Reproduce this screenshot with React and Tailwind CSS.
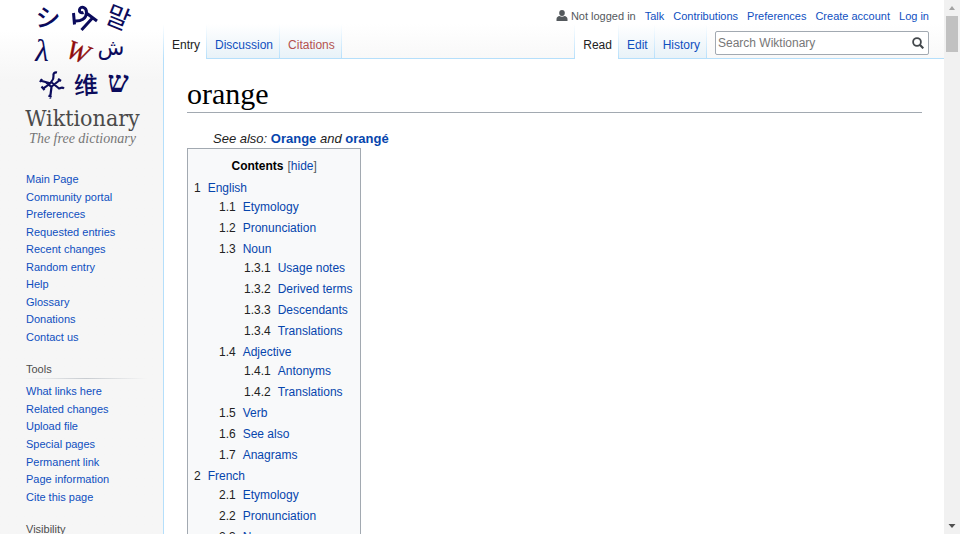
import React from "react";

const navLinks = ["Main Page", "Community portal", "Preferences", "Requested entries", "Recent changes", "Random entry", "Help", "Glossary", "Donations", "Contact us"];
const toolLinks = ["What links here", "Related changes", "Upload file", "Special pages", "Permanent link", "Page information", "Cite this page"];
const personalLinks = ["Talk", "Contributions", "Preferences", "Create account", "Log in"];

const contents = [
  {
    label: "English",
    children: [
      { label: "Etymology" },
      { label: "Pronunciation" },
      { label: "Noun", children: [{ label: "Usage notes" }, { label: "Derived terms" }, { label: "Descendants" }, { label: "Translations" }] },
      { label: "Adjective", children: [{ label: "Antonyms" }, { label: "Translations" }] },
      { label: "Verb" },
      { label: "See also" },
      { label: "Anagrams" },
    ],
  },
  { label: "French", children: [{ label: "Etymology" }, { label: "Pronunciation" }, { label: "Noun" }] },
];

function Logo() {
  return (
    <a href="#main" aria-label="Wiktionary, The free dictionary" className="flex flex-col items-center">
      <svg viewBox="0 0 104 104" className="h-[104px] w-[104px] overflow-visible" fill="#0b0b5c" aria-hidden="true">
        <g fontFamily="'Noto Sans CJK JP', sans-serif" textAnchor="middle">
          <text x="17" y="27" fontSize="25" fontWeight="500" transform="rotate(3 17 18)">シ</text>
          <text x="87" y="27" fontSize="26" fontFamily="'Noto Sans CJK KR', sans-serif" transform="rotate(22 87 18)">말</text>
          <text x="11" y="61" fontSize="31" fontStyle="italic" fontFamily="'Liberation Serif', serif">λ</text>
          <text x="47" y="61" fontSize="27" fontStyle="italic" fontFamily="'Liberation Serif', serif" fill="#8f0d0d" stroke="#8f0d0d" strokeWidth="0.3" transform="rotate(20 47 52)">W</text>
          <text x="80" y="55" fontSize="22" fontFamily="'DejaVu Sans', sans-serif">ش</text>
          <text x="55" y="94" fontSize="24" fontWeight="500" fontFamily="'Noto Sans CJK SC', sans-serif" transform="rotate(-3 55 86)">维</text>
          <text x="87" y="92" fontSize="30" fontWeight="bold" fontFamily="'Liberation Serif', serif">ש</text>
        </g>
        <g fill="none" stroke="#0b0b5c" strokeLinejoin="round">
          <path strokeWidth="3" d="M42.500 13l1 11.500M43.500 21C50 21.500 55.500 18.500 55.500 12.500C55.500 7 49.500 5.500 48.500 9.500C48 12 50 13.500 52.500 12.500M61 18.500L50.500 30M56 13.500l10 7.500" />
          <path strokeWidth="2.200" d="M26 72.500C23.500 72 22 73.500 22.500 76C23 79 21 83 11.500 89M9 80.500L20 83.500M11 79l-2 3M10.500 86.500l3 3.500M15 82.500L20.500 87L19 98.500M17.500 95.500l3 1.500M20 87L29.500 79.500M27 79l3 2M20 82L27.500 88C29.500 89.500 30 86 33 88.500" />
        </g>
      </svg>
      <span className="font-['DejaVu_Serif_Condensed','DejaVu_Serif',serif] text-[23px] leading-7 text-[#4a4a4a]">Wiktionary</span>
      <span className="font-['Liberation_Serif',serif] text-[14px] italic leading-[14px] text-[#777]">The free dictionary</span>
    </a>
  );
}

function Tab({ label, selected, missing }) {
  return (
    <li className="flex">
      <a
        href={"#" + label.toLowerCase()}
        className={
          "flex items-end pl-2 pr-1.5 text-[12px] leading-4 " +
          (selected ? "bg-white pb-1.5 text-[#222]" : "mb-px bg-linear-to-b from-white to-[#e8f2f8] pb-[5px] " + (missing ? "text-[#b4524f]" : "text-[#0f4fbf]"))
        }
      >
        {label}
      </a>
      <span className="w-px bg-linear-to-b from-white to-[#b5dffb]" />
    </li>
  );
}

function Portal({ title, links, listClass }) {
  return (
    <section className="pt-4">
      <h3 className="pl-px leading-4 text-[#4d4d4d]">{title}</h3>
      <div className="mb-1 mt-px h-px bg-linear-to-r from-[#f6f6f6] via-[#c8ccd1] to-[#f6f6f6]" />
      <LinkList links={links} listClass={listClass} />
    </section>
  );
}

function LinkList({ links, listClass }) {
  return (
    <ul className={"grid content-between pl-px leading-4 " + listClass}>
      {links.map((l) => (
        <li key={l}>
          <a href="#page" className="text-[#0f4fbf]">{l}</a>
        </li>
      ))}
    </ul>
  );
}

function TocList({ items, prefix }) {
  return (
    <ul className={prefix ? "-mt-0.5 pl-[25px]" : ""}>
      {items.map((item, i) => {
        const number = prefix + (i + 1);
        return (
          <li key={number}>
            <a href="#section" className="flex gap-[7px] text-[#0645ad]">
              <span className="text-[#222]">{number}</span>
              <span>{item.label}</span>
            </a>
            {item.children && <TocList items={item.children} prefix={number + "."} />}
          </li>
        );
      })}
    </ul>
  );
}

export default function App() {
  return (
    <div className="flex h-screen overflow-hidden bg-white font-['Liberation_Sans',Arial,sans-serif] text-[#222]">
      <aside className="w-[163px] shrink-0 bg-[#f6f6f6] bg-linear-to-b from-white from-[30px] to-[#f6f6f6] to-[80px] text-[11px]">
        <div className="pl-0.5">
          <Logo />
        </div>
        <nav aria-label="Navigation" className="pl-[25px] pr-4 pt-[25px]">
          <LinkList links={navLinks} listClass="min-h-[174px]" />
          <Portal title="Tools" links={toolLinks} listClass="min-h-[122px]" />
          <Portal title="Visibility" links={[]} listClass="" />
        </nav>
      </aside>
      <div className="flex min-w-0 flex-1 flex-col">
        <header className="bg-linear-to-b from-white from-40% to-[#f8f8f8]">
          <nav aria-label="Personal" className="flex h-6 items-center justify-end gap-[9px] pr-[15px] pt-2 text-[11px] leading-4 text-[#0f4fbf]">
            <span className="flex items-center gap-[3px] text-[#54595d]">
              <svg viewBox="0 0 12 12" className="h-3 w-3" fill="#54595d" aria-hidden="true">
                <ellipse cx="6" cy="3" rx="2.8" ry="3" />
                <path d="M.5 11V9C.5 7.300 2 6.300 3.500 6.100c1.500 1 3.500 1 5 0C10 6.300 11.500 7.300 11.500 9V11z" />
              </svg>
              Not logged in
            </span>
            {personalLinks.map((l) => (
              <a key={l} href="#user">{l}</a>
            ))}
          </nav>
          <div className="flex h-[35px] justify-between">
            <div className="flex flex-1 justify-between border-b border-[#b5dffb] pr-2">
              <ul className="-mb-px flex">
                <li className="w-px bg-linear-to-b from-white to-[#b5dffb]" />
                <Tab label="Entry" selected />
                <Tab label="Discussion" />
                <Tab label="Citations" missing />
              </ul>
              <ul className="-mb-px flex">
                <li className="w-px bg-linear-to-b from-white to-[#b5dffb]" />
                <Tab label="Read" selected />
                <Tab label="Edit" />
                <Tab label="History" />
              </ul>
            </div>
            <form className="border-b border-[#b5dffb] pr-[15px] pt-[7px]" onSubmit={(e) => e.preventDefault()}>
              <div className="flex h-6 w-[214px] items-center rounded-xs border border-[#a2a9b1] bg-white pr-1">
                <input type="search" aria-label="Search Wiktionary" placeholder="Search Wiktionary" className="min-w-0 flex-1 pl-0.5 text-[12px] leading-4 outline-none placeholder:text-[#777]" />
                <button type="submit" aria-label="Search">
                  <svg viewBox="0 0 12 12" className="h-3 w-3" fill="none" stroke="#43484c" strokeWidth="1.8" aria-hidden="true">
                    <circle cx="5" cy="5" r="3.900" />
                    <path d="M7.800 7.800l3.500 3.500" strokeWidth="2.200" />
                  </svg>
                </button>
              </div>
            </form>
          </div>
        </header>
        <main className="flex-1 border-l border-[#b5dffb] pl-[23px] pr-[22px] pt-5 text-[12px]">
          <h1 className="border-b border-[#a2a9b1] pb-[3px] font-['Liberation_Serif',serif] text-[30px] leading-[30px] text-black">orange</h1>
          <p className="pl-[26px] pt-[17px] text-[13px] italic leading-[18px]">
            See also:{" "}
            <a href="#Orange" className="font-bold not-italic text-[#0645ad]">Orange</a> and{" "}
            <a href="#orangé" className="font-bold not-italic text-[#0645ad]">orangé</a>
          </p>
          <nav aria-label="Contents" className="w-fit border border-[#a2a9b1] bg-[#f8f9fa] pl-1.5 pr-2 pt-[7px] leading-[21px]">
            <div className="flex justify-center gap-1 pb-0.5 pl-0.5 leading-5">
              <h2 className="font-bold text-black">Contents</h2>
              <span className="text-[#54595d]">[<button type="button" className="text-[#0645ad]">hide</button>]</span>
            </div>
            <TocList items={contents} prefix="" />
          </nav>
        </main>
      </div>
      <div className="flex w-4 shrink-0 flex-col items-center bg-[#f1f1f1]" aria-hidden="true">
        <svg viewBox="0 0 16 16" className="h-4 w-4" fill="#a3a3a3"><path d="M5 10l3-4 3 4z" /></svg>
        <div className="h-9 w-3 bg-[#c1c1c1]" />
        <svg viewBox="0 0 16 16" className="mt-auto h-4 w-4" fill="#505050"><path d="M4.500 6h7L8 10z" /></svg>
      </div>
    </div>
  );
}
